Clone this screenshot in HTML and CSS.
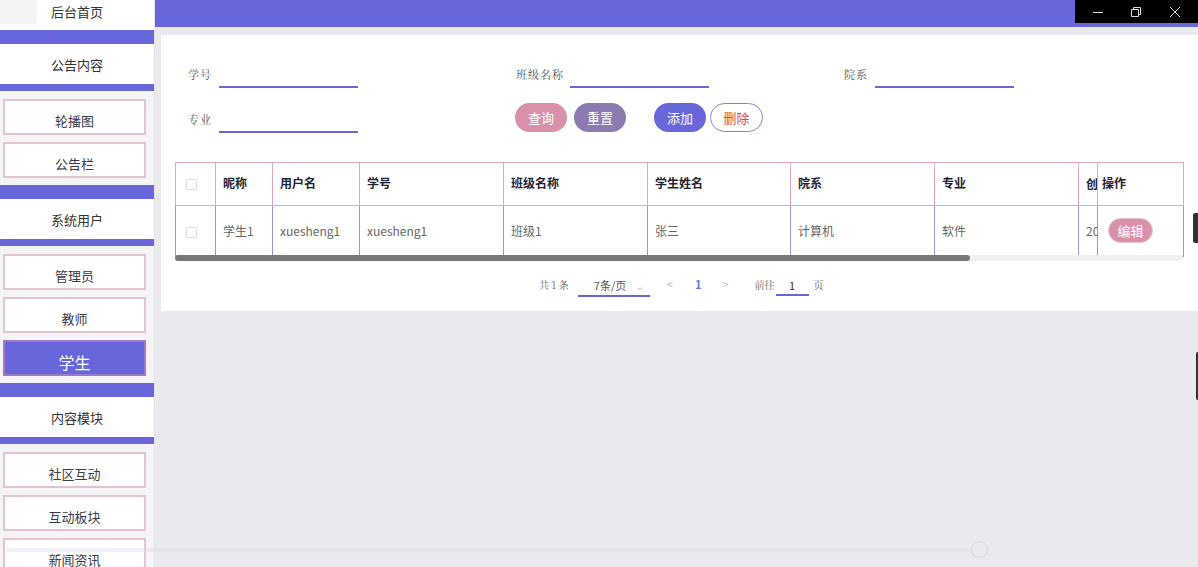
FILE: index.html
```html
<!DOCTYPE html>
<html lang="zh">
<head>
<meta charset="utf-8">
<title>学生管理</title>
<link rel="stylesheet" href="styles.css">
</head>
<body>
<div class="app">
  <aside class="sidebar">
    <div class="home"><span class="home-box"></span><span class="home-text">后台首页</span></div>
    <div class="group-title">公告内容</div>
    <ul class="sub">
      <li class="sub-item">轮播图</li>
      <li class="sub-item">公告栏</li>
    </ul>
    <div class="group-title">系统用户</div>
    <ul class="sub">
      <li class="sub-item">管理员</li>
      <li class="sub-item">教师</li>
      <li class="sub-item active">学生</li>
    </ul>
    <div class="group-title">内容模块</div>
    <ul class="sub">
      <li class="sub-item">社区互动</li>
      <li class="sub-item">互动板块</li>
      <li class="sub-item">新闻资讯</li>
    </ul>
  </aside>
  <main class="main">
    <header class="topbar"></header>
    <div class="winctl">
      <svg width="12" height="12" viewBox="0 0 12 12"><path d="M1 6.5h10" stroke="#ddd" stroke-width="1" fill="none"/></svg>
      <svg width="12" height="12" viewBox="0 0 12 12"><path d="M1.5 3.5h7v7h-7z M3.5 3.5v-2h7v7h-2" stroke="#ddd" stroke-width="1" fill="none"/></svg>
      <svg width="12" height="12" viewBox="0 0 12 12"><path d="M1 1l10 10M11 1L1 11" stroke="#ddd" stroke-width="1" fill="none"/></svg>
    </div>
    <section class="card">
      <div class="form">
        <div class="form-row">
          <div class="field"><label>学号</label><span class="line"></span></div>
          <div class="field"><label>班级名称</label><span class="line"></span></div>
          <div class="field"><label>院系</label><span class="line"></span></div>
        </div>
        <div class="form-row">
          <div class="field"><label>专业</label><span class="line"></span></div>
          <div class="btns">
            <button class="btn pink">查询</button>
            <button class="btn grape">重置</button>
            <button class="btn purple">添加</button>
            <button class="btn outline">删除</button>
          </div>
        </div>
      </div>
      <div class="table-wrap">
        <table class="tbl">
          <colgroup>
            <col style="width:40px"><col style="width:57px"><col style="width:87px"><col style="width:144px"><col style="width:144px"><col style="width:143px"><col style="width:144px"><col style="width:144px"><col style="width:19px"><col style="width:86px">
          </colgroup>
          <thead>
            <tr><th><span class="cb"></span></th><th>昵称</th><th>用户名</th><th>学号</th><th>班级名称</th><th>学生姓名</th><th>院系</th><th>专业</th><th class="clip">创</th><th class="op">操作</th></tr>
          </thead>
          <tbody>
            <tr><td><span class="cb"></span></td><td>学生1</td><td>xuesheng1</td><td>xuesheng1</td><td>班级1</td><td>张三</td><td>计算机</td><td>软件</td><td class="clip">20</td><td class="op"><button class="edit">编辑</button></td></tr>
          </tbody>
        </table>
        <div class="scroll"><span class="thumb"></span></div>
      </div>
      <div class="pager">
        <span class="total">共 1 条</span>
        <span class="size">7条/页<span class="caret">⌄</span></span>
        <span class="arrow">&lt;</span>
        <span class="num">1</span>
        <span class="arrow">&gt;</span>
        <span class="goto">前往</span>
        <span class="jump">1</span>
        <span class="goto">页</span>
      </div>
    </section>
    <div class="bottom-slider"><span class="knob"></span></div>
    <span class="edge-tab t1"></span>
    <span class="edge-tab t2"></span>
  </main>
</div>
</body>
</html>
```
FILE: styles.css
```css
* { box-sizing: border-box; }
html, body { margin: 0; padding: 0; }
body {
  width: 1198px; height: 567px; overflow: hidden;
  font-family: "Noto Sans CJK SC", "Noto Sans", sans-serif;
  background: #e9e9ee;
}
.app { display: flex; height: 567px; }
.sidebar {
  width: 155px; flex: none; background: #f4f4f6;
  border-right: 1px solid #e2e2e8;
  overflow: hidden;
}
.home {
  height: 30px; background: #fff; position: relative;
  display: flex; justify-content: center; align-items: flex-start;
}
.home-box { position: absolute; left: 0; top: 0; width: 37px; height: 24px; background: #f3f3f5; }
.home-text { font-size: 13px; color: #333; line-height: 24px; }
.group-title {
  height: 61px; background: #fff;
  border-top: 14px solid #6767db; border-bottom: 7px solid #6767db;
  text-align: center; font-size: 13px; color: #333; line-height: 42px;
}
.sub { list-style: none; margin: 0; padding: 8px 0 0 0; }
.sub-item {
  margin: 0 8px 7px 3px; height: 36px;
  border: 2px solid #e4c3d0; background: #fff;
  text-align: center; font-size: 13px; color: #3a3a4a;
  line-height: 40px;
}
.sub-item.active {
  background: #6767db; border-color: #a07ac8; color: #fff; font-size: 16px;
}
.main { flex: 1; position: relative; display: flex; flex-direction: column; }
.topbar { height: 27px; background: #6767db; flex: none; }
.winctl {
  position: absolute; right: 0; top: 0; width: 123px; height: 23px; background: #000;
  display: flex; align-items: center; justify-content: space-around; padding: 0 4px;
}
.card {
  margin: 8px 0 0 6px; height: 276px; background: #fff;
  padding: 0 0 0 14px;
}
.form { padding-top: 27px; height: 127px; }
.form-row { display: flex; height: 45px; align-items: flex-start; }
.field { width: 328px; display: flex; align-items: flex-start; padding-left: 13px; }
.field label {
  font-family: "AR PL UKai CN", "Noto Serif CJK SC", "Noto Sans CJK SC", serif;
  font-size: 11px; color: #555; width: 31px; white-space: nowrap; line-height: 24px; letter-spacing: 1px;
}
.field:nth-child(2) label { width: 54px; }
.field .line { display: block; width: 139px; height: 26px; border-bottom: 2px solid #6a66d0; }
.btns { display: flex; margin-left: 12px; margin-top: -4px; }
.btn {
  height: 29px; width: 52px; border-radius: 15px; border: none;
  font-family: "Noto Sans CJK SC", sans-serif; font-size: 13px; color: #fff; padding: 0; margin-right: 7px;
}
.btn.pink { background: #d990aa; }
.btn.grape { background: #8b7bb1; }
.btn.purple { background: #6767db; margin-left: 21px; margin-right: 4px; }
.btn.outline { background: #fff; border: 1px solid #8a80d0; color: #e04a3a; width: 53px; }
.table-wrap { width: 1008px; position: relative; }
.tbl { border-collapse: collapse; table-layout: fixed; width: 1008px; font-size: 12px; }
.tbl th {
  height: 43px; text-align: left; padding: 0 7px 3px; color: #1e2233; font-weight: bold;
  border: 1px solid #e0a9bd; white-space: nowrap; overflow: hidden;
}
.tbl td {
  height: 51px; text-align: left; padding: 0 7px 2px; color: #666;
  border: 1px solid #9c94c8; border-top: 1px solid #a9a2cf; white-space: nowrap; overflow: hidden;
}
.tbl .clip { padding: 0 0 2px 7px; text-overflow: clip; }
.tbl .op { padding-left: 4px; box-shadow: -1px 0 2px rgba(0,0,0,0.08); }
.cb { display: inline-block; width: 11px; height: 11px; border: 1px solid #ddd; border-radius: 2px; margin-left: 3px; vertical-align: middle; }
.edit {
  width: 45px; height: 25px; border: 1px solid #e8c8c8; border-radius: 13px; background: #d990aa;
  color: #fff; font-size: 13px; padding: 0; margin-left: 6px; font-family: "Noto Sans CJK SC", sans-serif;
}
.scroll { position: absolute; left: 0; bottom: -4px; width: 1008px; height: 6px; background: #f0f0f3; border-radius: 3px; }
.thumb { display: block; width: 795px; height: 6px; background: #777; border-radius: 3px; }
.pager {
  display: flex; align-items: center; height: 30px; margin-top: 12px; padding-left: 364px;
  font-size: 10px; color: #666;
}
.total { font-family: "AR PL UKai CN", "Noto Serif CJK SC", serif; margin-right: 9px; }
.size {
  width: 72px; height: 22px; border-bottom: 2px solid #6a66d0; position: relative;
  padding-left: 16px; line-height: 20px; color: #555; font-size: 11px; margin-top: 4px;
}
.caret { position: absolute; right: 6px; top: 0; color: #ccc; font-size: 11px; }
.arrow { color: #bbb; font-size: 11px; margin-left: 17px; }
.num { color: #5b7bd5; margin-left: 22px; font-size: 11px; font-weight: bold; }
.arrow + .goto { margin-left: 26px; }
.goto { font-family: "AR PL UKai CN", "Noto Serif CJK SC", serif; }
.arrow ~ .arrow { margin-left: 21px; }
.jump {
  width: 33px; height: 20px; border-bottom: 2px solid #6a66d0; text-align: center; color: #333;
  margin: 4px 5px 0 1px; font-size: 11px; line-height: 18px;
}
.bottom-slider {
  position: absolute; left: -148px; top: 548px; width: 963px; height: 4px; background: rgba(215,222,235,0.45);
}
.knob {
  position: absolute; right: -18px; top: -7px; width: 17px; height: 17px; border-radius: 50%;
  border: 1px solid #d6d6de; background: transparent;
}
.edge-tab { position: absolute; right: 0; width: 5px; background: #333; border-radius: 2px 0 0 2px; }
.edge-tab.t1 { top: 213px; height: 30px; }
.edge-tab.t2 { top: 352px; height: 48px; width: 2px; }
```
